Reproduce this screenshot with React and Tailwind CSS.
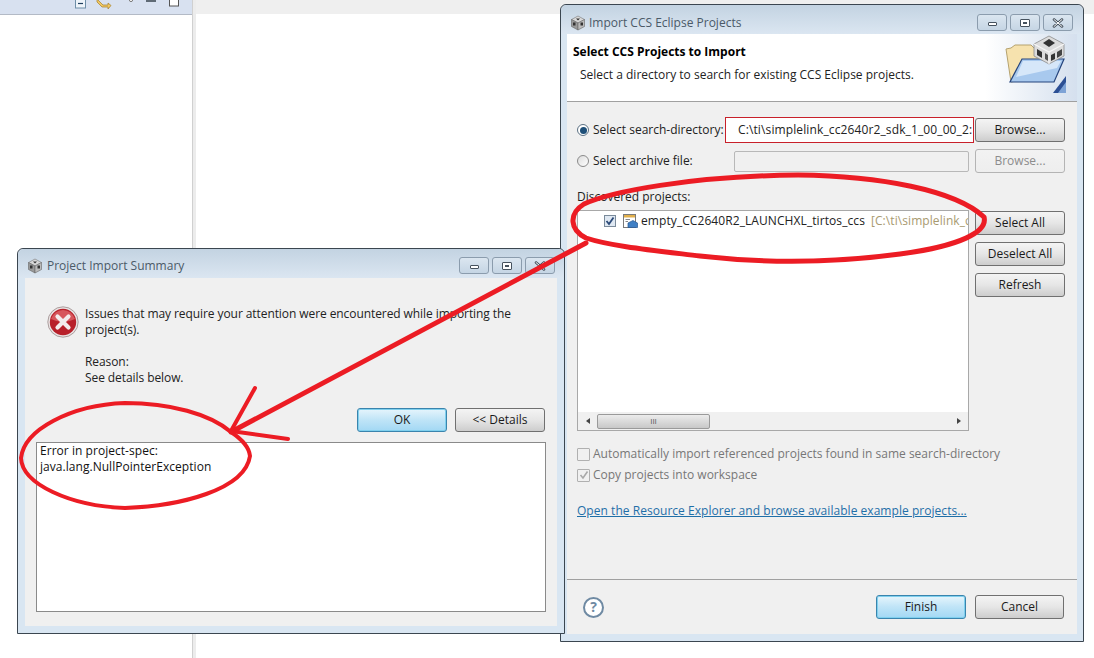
import React from 'react';

const font = { fontFamily: '"Open Sans", "Noto Sans", sans-serif' };

function DiceIcon() {
    return (
        <svg width="16" height="16" viewBox="0 0 16 16" className="shrink-0">
            <path d="M8 1 L14.5 4.5 L8 8 L1.5 4.5 Z" fill="#d8d8d8" stroke="#777" strokeWidth="0.6" />
            <path d="M1.5 4.5 L8 8 L8 15 L1.5 11.5 Z" fill="#9a9a9a" stroke="#666" strokeWidth="0.6" />
            <path d="M14.5 4.5 L8 8 L8 15 L14.5 11.5 Z" fill="#bbbbbb" stroke="#666" strokeWidth="0.6" />
            <path d="M6 3.5 L10 3.5 L8 5.6 Z" fill="#333" />
            <rect x="3" y="7.5" width="2.5" height="3" fill="#333" />
            <rect x="10.5" y="7.5" width="2.5" height="3" fill="#333" />
        </svg>
    );
}

function TitleButtons() {
    const btn = "w-[30px] h-[17px] rounded-[3px] border border-[#8b9cad] bg-linear-to-b from-[#dbe6f0] to-[#c5d5e4] flex items-center justify-center";
    return (
        <div className="flex gap-[3px] ml-auto">
            <div className={btn}><div className="w-[9px] h-[4px] mt-[3px] border border-[#46525e] bg-white rounded-[1px]" /></div>
            <div className={btn}><div className="w-[10px] h-[8px] border border-[#46525e] bg-white rounded-[1px] flex items-center justify-center"><div className="w-[4px] h-[2px] bg-[#46525e]" /></div></div>
            <div className={btn}>
                <svg width="12" height="10" viewBox="0 0 12 10">
                    <path d="M2 1.5 L10 8.5 M10 1.5 L2 8.5" stroke="#46525e" strokeWidth="2.6" strokeLinecap="round" />
                    <path d="M2 1.5 L10 8.5 M10 1.5 L2 8.5" stroke="#fff" strokeWidth="1" strokeLinecap="round" />
                </svg>
            </div>
        </div>
    );
}

function Btn({ children, kind, className }) {
    let look = "border-[#707070] from-[#f4f4f4] via-[#e6e6e6] to-[#cdcdcd] text-[#1a1a1a]";
    if (kind === 'default') look = "border-[#3a84ad] from-[#e6f5fc] via-[#bfe4f7] to-[#a2d8f4] text-[#1a1a1a] shadow-[inset_0_0_0_1px_#7fd0ee]";
    if (kind === 'disabled') look = "border-[#b4b4b4] from-[#f2f2f2] via-[#f0f0f0] to-[#eeeeee] text-[#8c8c8c]";
    return (
        <div className={`rounded-[3px] border bg-linear-to-b flex items-center justify-center text-[12px] ${look} ${className}`}>
            {children}
        </div>
    );
}

function FolderBanner() {
    return (
        <svg width="62" height="62" viewBox="0 0 62 62" className="shrink-0">
            <path d="M1 14 L6 13 L10 10 L26 10 L30 14 L44 14 L44 40 L6 47 Z" fill="#f6e2ae" stroke="#b5a26e" strokeWidth="1" />
            <path d="M17 24 L59 24 L49 47 L5 47 Z" fill="#a8c9ee" stroke="#25447c" strokeWidth="1.2" />
            <path d="M18 26 L56 26 L52 33 L11 42 Z" fill="#d6e7f9" />
            <path d="M29 9 L44 1 L59 9 L59 21 L44 29 L29 21 Z" fill="#dcdcdc" stroke="#8c8c8c" strokeWidth="0.8" />
            <path d="M38 8 L44 4 L50 8 L44 12 Z" fill="#333" />
            <path d="M32 14 L37 17 L37 23 L32 20 Z" fill="#333" />
            <path d="M40 18 L43 20 L43 26 L40 24 Z" fill="#555" />
            <path d="M46 20 L50 18 L50 24 L46 26 Z" fill="#333" />
            <path d="M52 17 L57 14 L57 20 L52 23 Z" fill="#444" />
            <path d="M29 9 L44 17 L59 9 M44 17 L44 29" stroke="#f6f6f6" strokeWidth="1.2" fill="none" />
            <path d="M61 41 L61 58 L48 58 Z" fill="#2c4f94" />
            <path d="M61 47 L61 58 L53 58 Z" fill="#7ea3d6" />
        </svg>
    );
}

function ProjectIcon() {
    return (
        <svg width="16" height="16" viewBox="0 0 16 16" className="shrink-0">
            <rect x="1.5" y="1.5" width="12" height="13" fill="#fff" stroke="#7a7a7a" />
            <rect x="2" y="2" width="11" height="2.5" fill="#e2b04c" />
            <path d="M3.5 6.5 H8 M3.5 8.5 H6" stroke="#888" />
            <path d="M6 10 L11 7.5 L15.5 10 L15.5 14.5 L6 14.5 Z" fill="#3f7fc4" stroke="#27568f" strokeWidth="0.7" />
        </svg>
    );
}

function ErrorIcon() {
    return (
        <svg width="32" height="32" viewBox="0 0 32 32" className="shrink-0">
            <circle cx="16" cy="16" r="15.2" fill="#e9e4e4" stroke="#9a8a8a" strokeWidth="0.8" />
            <circle cx="16" cy="16" r="13.2" fill="#b8202a" />
            <path d="M4 13 A12.5 12.5 0 0 1 28 13 Q16 19 4 13 Z" fill="#d7565c" />
            <path d="M10.5 10.5 L21.5 21.5 M21.5 10.5 L10.5 21.5" stroke="#f3ecec" strokeWidth="4.2" strokeLinecap="round" />
        </svg>
    );
}

function RightWindow() {
    return (
        <div className="absolute left-[560px] top-[4px] w-[524px] h-[638px] border border-[#3b4650] rounded-t-[6px] bg-[#d9e6f2] flex flex-col" style={font}>
            <div className="h-[29px] shrink-0 flex items-center pl-[9px] pr-[10px] pt-[6px] rounded-t-[6px] bg-linear-to-b from-[#c3d3e2] to-[#dbe6f1]">
                <DiceIcon />
                <span className="ml-[3px] text-[12px] text-[#4b5a68]">Import CCS Eclipse Projects</span>
                <TitleButtons />
            </div>
            <div className="mx-[6px] mb-[7px] flex-1 flex flex-col bg-[#f0f0f0]">
                <div className="h-[68px] shrink-0 border-b border-[#a0a0a0] bg-linear-to-r from-white from-[82%] to-[#d5e0ee] flex">
                    <div className="flex-1 pl-[6px] pt-[10px]">
                        <div className="text-[12px] font-bold leading-[16px] text-black">Select CCS Projects to Import</div>
                        <div className="text-[12px] leading-[16px] mt-[7px] ml-[7px] text-[#222]">Select a directory to search for existing CCS Eclipse projects.</div>
                    </div>
                    <div className="pr-[10px] pt-[1px]"><FolderBanner /></div>
                </div>

                <div className="pl-[10px] pr-[11px] flex-1 flex flex-col text-[12px] text-[#222]">
                    <div className="flex items-center h-[24px] mt-[16px]">
                        <div className="w-[148px] flex items-center shrink-0">
                            <div className="w-[12px] h-[12px] rounded-full border border-[#5b7083] bg-white flex items-center justify-center mr-[4px]">
                                <div className="w-[7px] h-[7px] rounded-full bg-[#1e4f78]" />
                            </div>
                            <span>Select search-directory:</span>
                        </div>
                        <div className="w-[249px] h-[26px] border border-[#c8202a] bg-white flex items-center pl-[12px] overflow-hidden whitespace-nowrap text-[#222] tracking-[0.12px]">
                            C:\ti\simplelink_cc2640r2_sdk_1_00_00_2:
                        </div>
                        <Btn className="w-[90px] h-[24px] ml-[1px]">Browse...</Btn>
                    </div>
                    <div className="flex items-center h-[24px] mt-[7px]">
                        <div className="w-[157px] flex items-center shrink-0">
                            <div className="w-[12px] h-[12px] rounded-full border border-[#8a8a8a] bg-linear-to-br from-[#dcdcdc] to-white mr-[4px]" />
                            <span>Select archive file:</span>
                        </div>
                        <div className="w-[235px] h-[21px] border border-[#b8b8b8] rounded-[2px] bg-[#f0f0f0]" />
                        <Btn kind="disabled" className="w-[90px] h-[24px] ml-[6px]">Browse...</Btn>
                    </div>
                    <div className="h-[16px] leading-[16px] mt-[16px]">Discovered projects:</div>
                    <div className="flex gap-[6px] mt-[5px]">
                        <div className="w-[392px] h-[221px] border border-[#a8a8a8] bg-white flex flex-col">
                            <div className="flex-1 overflow-hidden">
                                <div className="flex items-center h-[19px] pl-[26px] whitespace-nowrap tracking-[0.08px]">
                                    <div className="w-[12px] h-[12px] shrink-0 border border-[#7a8a9a] bg-[#dfe8f2] flex items-center justify-center">
                                        <svg width="10" height="10" viewBox="0 0 10 10"><path d="M1.5 5 L4 8 L8.5 1.5" stroke="#2c4a78" strokeWidth="1.8" fill="none" /></svg>
                                    </div>
                                    <div className="ml-[6px]"><ProjectIcon /></div>
                                    <span className="ml-[3px]">empty_CC2640R2_LAUNCHXL_tirtos_ccs</span>
                                    <span className="ml-[6px] text-[#a89a70]">[C:\ti\simplelink_c</span>
                                </div>
                            </div>
                            <div className="h-[18px] bg-[#f0f0f0] flex items-center relative">
                                <div className="w-[19px] flex justify-center"><div className="border-y-[3px] border-y-transparent border-r-[4px] border-r-[#444]" /></div>
                                <div className="w-[113px] h-[15px] border border-[#9a9a9a] rounded-[2px] bg-linear-to-b from-[#ececec] to-[#c8c8c8] flex items-center justify-center text-[8px] leading-none text-[#555]">III</div>
                                <div className="ml-auto w-[19px] flex justify-center"><div className="border-y-[3px] border-y-transparent border-l-[4px] border-l-[#444]" /></div>
                            </div>
                        </div>
                        <div className="flex flex-col gap-[7px] mt-[1px]">
                            <Btn className="w-[90px] h-[24px]">Select All</Btn>
                            <Btn className="w-[90px] h-[24px]">Deselect All</Btn>
                            <Btn className="w-[90px] h-[24px]">Refresh</Btn>
                        </div>
                    </div>
                    <div className="flex items-center h-[16px] mt-[15px] text-[#777]">
                        <div className="w-[13px] h-[13px] border border-[#b0b0b0] bg-[#f0f0f0] rounded-[1px] mr-[3px]" />
                        <span>Automatically import referenced projects found in same search-directory</span>
                    </div>
                    <div className="flex items-center h-[16px] mt-[5px] text-[#777]">
                        <div className="w-[13px] h-[13px] border border-[#b0b0b0] bg-[#f0f0f0] rounded-[1px] mr-[3px] flex items-center justify-center">
                            <svg width="10" height="10" viewBox="0 0 10 10"><path d="M1.5 5 L4 8 L8.5 1.5" stroke="#a8a8a8" strokeWidth="1.6" fill="none" /></svg>
                        </div>
                        <span>Copy projects into workspace</span>
                    </div>
                    <div className="h-[16px] leading-[16px] mt-[20px] text-[#1f6fa8] underline tracking-[0.04px]">Open the Resource Explorer and browse available example projects...</div>
                </div>

                <div className="h-[55px] shrink-0 border-t border-[#a0a0a0] flex items-center pl-[16px] pr-[13px]">
                    <div className="w-[21px] h-[21px] rounded-full border-2 border-[#6f8aa3] bg-white flex items-center justify-center text-[14px] font-bold leading-none text-[#6f8aa3]">?</div>
                    <Btn kind="default" className="w-[90px] h-[24px] ml-auto">Finish</Btn>
                    <Btn className="w-[89px] h-[24px] ml-[9px]">Cancel</Btn>
                </div>
            </div>
        </div>
    );
}

function LeftWindow() {
    return (
        <div className="absolute left-[17px] top-[248px] w-[548px] h-[386px] border border-[#3b4650] rounded-t-[6px] bg-[#d9e6f2] flex flex-col" style={font}>
            <div className="h-[29px] shrink-0 flex items-center pl-[9px] pr-[9px] pt-[4px] rounded-t-[6px] bg-linear-to-b from-[#c3d3e2] to-[#dbe6f1]">
                <DiceIcon />
                <span className="ml-[4px] text-[12px] text-[#4b5a68]">Project Import Summary</span>
                <TitleButtons />
            </div>
            <div className="mx-[7px] mb-[7px] flex-1 flex flex-col bg-[#f0f0f0] text-[12px] text-[#222]">
                <div className="flex pl-[22px] pt-[28px] h-[130px] shrink-0">
                    <div className="w-[38px]"><ErrorIcon /></div>
                    <div className="leading-[16px] w-[450px] tracking-[-0.08px]">
                        <div>Issues that may require your attention were encountered while importing the</div>
                        <div>project(s).</div>
                        <div className="mt-[16px]">Reason:</div>
                        <div>See details below.</div>
                    </div>
                </div>
                <div className="flex justify-end gap-[8px] pr-[12px]">
                    <Btn kind="default" className="w-[90px] h-[24px]">OK</Btn>
                    <Btn className="w-[90px] h-[24px]">&lt;&lt; Details</Btn>
                </div>
                <div className="mx-[11px] mt-[10px] h-[170px] border border-[#8a8a8a] bg-white pl-[3px] leading-[16px] text-[#111] tracking-[0.04px]">
                    <div>Error in project-spec:</div>
                    <div>java.lang.NullPointerException</div>
                </div>
            </div>
        </div>
    );
}

export default function App() {
    return (
        <div className="relative w-[1094px] h-[658px] overflow-hidden bg-white flex">
            {/* eclipse behind the dialogs */}
            <div className="w-[192px] shrink-0">
                <div className="h-[15px] bg-[#d8e1f0] border-b border-[#b3bac6] relative overflow-hidden flex items-start pl-[75px]">
                    <svg width="110" height="10" viewBox="0 0 110 10">
                        <rect x="0.5" y="-4" width="10" height="12" fill="#eef4fa" stroke="#6f8fa8" />
                        <path d="M3 3.5 H8" stroke="#1f3f5f" strokeWidth="1.2" />
                        <path d="M22 -1 L28 5 H33 V3 L36 5.5 L33 9 V7 H27 L22 2 Z" fill="#f2c862" stroke="#a37f2d" strokeWidth="0.7" />
                        <circle cx="56" cy="0" r="1.6" fill="#fff" stroke="#777" />
                        <path d="M71 1 H81" stroke="#5f6a75" strokeWidth="2" />
                        <rect x="94.5" y="-4" width="9" height="10" fill="#fff" stroke="#555" />
                    </svg>
                </div>
            </div>
            <div className="w-[4px] shrink-0 bg-[#ececec] border-l border-[#d0d0d0]" />
            <div className="flex-1">
                <div className="h-[14px] bg-[#efefef]" />
            </div>

            <RightWindow />
            <LeftWindow />

            {/* red hand drawn marks */}
            <svg className="absolute inset-0 pointer-events-none" width="1094" height="658" viewBox="0 0 1094 658" fill="none" stroke="#ec1c24" strokeLinecap="round" strokeLinejoin="round">
                <path strokeWidth="5" d="M586 238 C570 230 568 214 584 204 C610 192 690 176 798 175 C880 176 955 190 984 217 C988 232 960 246 900 254 C840 262 770 264 700 256 C650 250 610 246 586 238 Z" />
                <path strokeWidth="5" d="M586 243 L231 432" />
                <path strokeWidth="4" d="M255 388 L231 431 L288 439" />
                <path strokeWidth="4" d="M231 432 C210 414 170 403 125 403 C70 405 24 430 21 458 C22 484 70 506 125 508 C180 506 245 490 250 456 C249 446 240 438 231 432 Z" />
            </svg>
        </div>
    );
}
